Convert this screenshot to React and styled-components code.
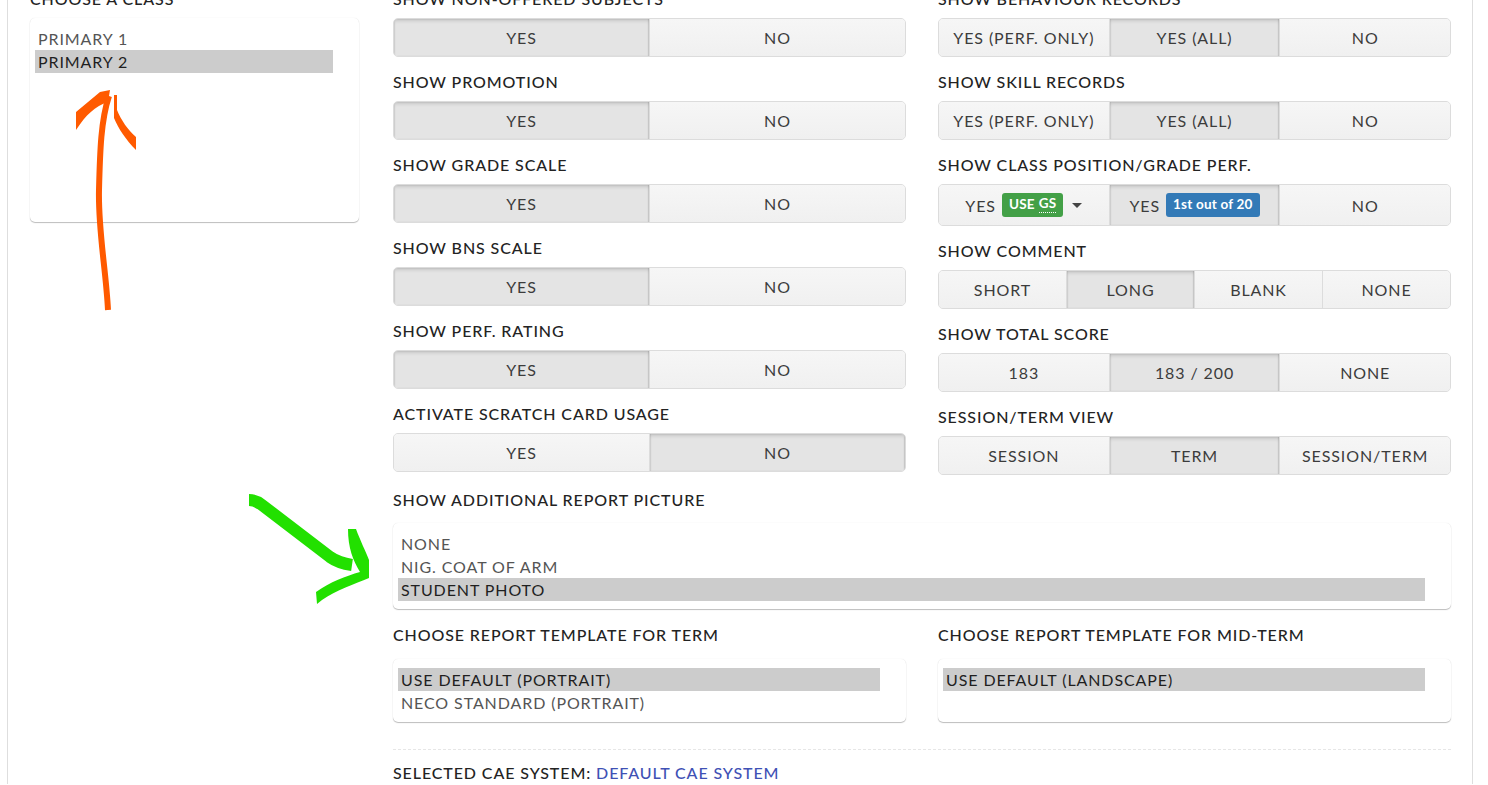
import styled, { createGlobalStyle } from "styled-components";

const GlobalStyle = createGlobalStyle`
    body {
        margin: 0;
        background: #fff;
        font-family: Lato, "Liberation Sans", sans-serif;
        color: #2b2b2b;
        letter-spacing: 0.9px;
    }
`

const Screen = styled.div`
    position: relative;
    width: 1488px;
    height: 785px;
    overflow: hidden;
`
const Panel = styled.div`
    margin-left: 7px;
    width: 1464px;
    min-height: 785px;
    border-left: 1px solid #dedede;
    border-right: 1px solid #dedede;
`
const Layout = styled.div`
    display: grid;
    grid-template-columns: 329px 1058px;
    column-gap: 34px;
    padding-left: 22px;
    margin-top: -12px;
`
const Columns = styled.div`
    display: grid;
    grid-template-columns: 513px 513px;
    column-gap: 32px;
    align-items: start;
`
const Stack = styled.div`
    display: flex;
    flex-direction: column;
`
const Field = styled.div`
    margin-bottom: 14px;
`
const Label = styled.div`
    font-size: 16px;
    line-height: 22px;
    height: 22px;
    font-weight: 500;
    color: #232323;
    text-transform: uppercase;
    margin-bottom: 8px;
    white-space: nowrap;
`
const Group = styled.div`
    display: flex;
    border: 1px solid #dcdcdc;
    border-radius: 5px;
    overflow: hidden;
    background: #f3f3f3;
`
const Seg = styled.div`
    flex: 1 1 0;
    display: flex;
    align-items: center;
    justify-content: center;
    gap: 6px;
    padding: 8px 4px;
    line-height: 21px;
    font-size: 16px;
    color: #3c3c3c;
    white-space: nowrap;
    background: ${p => p.$active ? '#e4e4e4' : 'linear-gradient(#f6f6f6, #f0f0f0)'};
    box-shadow: ${p => p.$active ? 'inset 0 3px 4px -2px rgba(0,0,0,0.2), inset -1px 0 1px rgba(0,0,0,0.12), inset 1px 0 1px rgba(0,0,0,0.08)' : 'none'};
    & + & {
        border-left: 1px solid #dcdcdc;
    }
`
const Badge = styled.span`
    display: inline-flex;
    align-items: center;
    height: 24px;
    padding: 0 7px;
    border-radius: 3px;
    background: ${p => p.$color};
    color: #fff;
    font-size: 13.5px;
    font-weight: 700;
    line-height: 1;
    letter-spacing: 0.2px;
`
const Abbr = styled.span`
    margin-left: 4px;
    border-bottom: 1px dotted #fff;
    padding-bottom: 1px;
`
const Caret = styled.span`
    display: inline-block;
    width: 0;
    height: 0;
    margin-left: 3px;
    border-left: 5px solid transparent;
    border-right: 5px solid transparent;
    border-top: 5px solid #444;
`
const Listbox = styled.div`
    margin-top: ${p => p.$gap || 12}px;
    height: ${p => p.$h ? `${p.$h}px` : 'auto'};
    box-sizing: border-box;
    padding: 9px 26px 8px 5px;
    background: #fff;
    border-radius: 5px;
    box-shadow: 0 1px 1px rgba(0,0,0,0.25), 0 0 1px rgba(0,0,0,0.12);
`
const Option = styled.div`
    height: 23px;
    line-height: 23px;
    padding-left: 3px;
    font-size: 16px;
    color: ${p => p.$selected ? '#1f1f1f' : '#555'};
    background: ${p => p.$selected ? '#cccccc' : 'transparent'};
    white-space: nowrap;
`
const Section = styled.div`
    margin-bottom: 15px;
`
const Divider = styled.div`
    border-top: 1px dashed #e6e6e6;
    margin: 27px 0 12px;
`
const CaeLine = styled.div`
    font-size: 16px;
    line-height: 22px;
    font-weight: 500;
    color: #232323;
`
const CaeLink = styled.a`
    color: #3f51b5;
    text-decoration: none;
`
const Annotations = styled.svg`
    position: absolute;
    left: 0;
    top: 0;
    pointer-events: none;
`

const leftFields = [
    { label: "Show non-offered subjects", options: ["YES", "NO"], active: 0 },
    { label: "Show promotion", options: ["YES", "NO"], active: 0 },
    { label: "Show grade scale", options: ["YES", "NO"], active: 0 },
    { label: "Show BNS scale", options: ["YES", "NO"], active: 0 },
    { label: "Show perf. rating", options: ["YES", "NO"], active: 0 },
    { label: "Activate scratch card usage", options: ["YES", "NO"], active: 1 },
]

const rightFields = [
    { label: "Show behaviour records", options: ["YES (PERF. ONLY)", "YES (ALL)", "NO"], active: 1 },
    { label: "Show skill records", options: ["YES (PERF. ONLY)", "YES (ALL)", "NO"], active: 1 },
    { label: "Show class position/grade perf.", options: ["gs", "pos", "NO"], active: 1 },
    { label: "Show comment", options: ["SHORT", "LONG", "BLANK", "NONE"], active: 1 },
    { label: "Show total score", options: ["183", "183 / 200", "NONE"], active: 1 },
    { label: "Session/term view", options: ["SESSION", "TERM", "SESSION/TERM"], active: 1 },
]

const renderOption = (opt) => {
    if (opt === "gs") {
        return <>YES <Badge $color="#43a047">USE<Abbr>GS</Abbr></Badge><Caret /></>
    }
    if (opt === "pos") {
        return <>YES <Badge $color="#337ab7">1st out of 20</Badge></>
    }
    return opt
}

const ToggleField = ({ field }) => (
    <Field>
        <Label>{field.label}</Label>
        <Group>
            {field.options.map((opt, i) => (
                <Seg key={i} $active={i === field.active}>{renderOption(opt)}</Seg>
            ))}
        </Group>
    </Field>
)

const App = () => {
    return (
        <>
            <GlobalStyle />
            <Screen>
                <Panel>
                    <Layout>
                        <div>
                            <Label>Choose a class</Label>
                            <Listbox $gap={8} $h={204}>
                                <Option>PRIMARY 1</Option>
                                <Option $selected>PRIMARY 2</Option>
                            </Listbox>
                        </div>
                        <div>
                            <Columns>
                                <Stack>
                                    {leftFields.map(f => <ToggleField key={f.label} field={f} />)}
                                </Stack>
                                <Stack>
                                    {rightFields.map(f => <ToggleField key={f.label} field={f} />)}
                                </Stack>
                            </Columns>
                            <Section>
                                <Label>Show additional report picture</Label>
                                <Listbox>
                                    <Option>NONE</Option>
                                    <Option>NIG. COAT OF ARM</Option>
                                    <Option $selected>STUDENT PHOTO</Option>
                                </Listbox>
                            </Section>
                            <Columns>
                                <div>
                                    <Label>Choose report template for term</Label>
                                    <Listbox $gap={13}>
                                        <Option $selected>USE DEFAULT (PORTRAIT)</Option>
                                        <Option>NECO STANDARD (PORTRAIT)</Option>
                                    </Listbox>
                                </div>
                                <div>
                                    <Label>Choose report template for mid-term</Label>
                                    <Listbox $gap={13} $h={63}>
                                        <Option $selected>USE DEFAULT (LANDSCAPE)</Option>
                                    </Listbox>
                                </div>
                            </Columns>
                            <Divider />
                            <CaeLine>SELECTED CAE SYSTEM: <CaeLink href="#">DEFAULT CAE SYSTEM</CaeLink></CaeLine>
                        </div>
                    </Layout>
                </Panel>
                <Annotations width="1488" height="785" viewBox="0 0 1488 785">
                    <path d="M108 310 C106 270 98 230 99 190 C100 150 101 120 109 96" fill="none" stroke="#ff5a00" strokeWidth="6" />
                    <path d="M76 130 L76 112 L100 92 L110 90 L108 102 C95 106 86 115 76 130 Z" fill="#ff5a00" />
                    <path d="M114 95 L117 95 L117 110 C121 120 128 130 136 137 L136 150 C126 140 118 128 114 118 Z" fill="#ff5a00" />
                    <path d="M249 500 C254 500 258 502 262 505 L330 557 C337 562 345 564 352 565" fill="none" stroke="#22e000" strokeWidth="12" />
                    <path d="M348 529 L356 529 C360 540 366 552 369 560 L369 578 C355 584 336 590 322 600 L317 604 L316 592 C330 582 346 576 360 572 C353 560 348 548 348 529 Z" fill="#22e000" />
                </Annotations>
            </Screen>
        </>
    )
}

export default App
